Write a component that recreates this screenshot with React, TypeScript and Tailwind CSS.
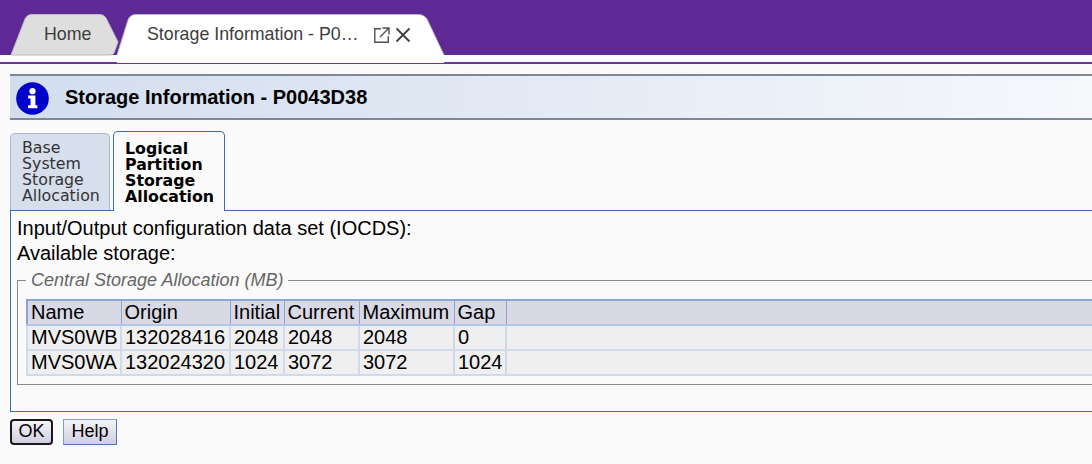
import React from "react";

const rows = [
  ["MVS0WB", "132028416", "2048", "2048", "2048", "0"],
  ["MVS0WA", "132024320", "1024", "3072", "3072", "1024"],
];
const heads = ["Name", "Origin", "Initial", "Current", "Maximum", "Gap"];
const widths = ["w-[94px]", "w-[109px]", "w-[54px]", "w-[75px]", "w-[95px]", "w-[52px]"];

export default function App() {
  return (
    <div className="h-[464px] w-[1092px] overflow-hidden bg-[#fafafa] font-['Liberation_Sans',Arial,sans-serif] text-black">
      <div className="relative h-[55px] bg-[#5f2995]">
        <svg className="absolute left-0 top-0" width="460" height="63" viewBox="0 0 460 63">
          <path d="M11 55 L25 19 Q27 14.5 32 14.5 L100 14.5 Q104 14.5 106 18 L118 42 L114 53 Q113 55 110 55 Z" fill="#dedede" stroke="#bcbcbc" />
          <path d="M117 55 L128 20 Q130 14.5 136 14.5 L418 14.5 Q424 14.5 427 19 L444 55 L444 63 L117 63 Z" fill="#ffffff" />
          <path d="M117 55 L128 20 Q130 14.5 136 14.5 L418 14.5 Q424 14.5 427 19 L444 55" fill="none" stroke="#b9b4c4" />
        </svg>
        <div className="relative flex h-[55px] items-center pt-[14px] text-[17.8px] text-[#3d3d3d]">
          <span className="ml-[44px] w-[103px]">Home</span>
          <span className="w-[227px] whitespace-nowrap">Storage Information - P0…</span>
          <svg width="16" height="16" viewBox="0 0 16 16" fill="none" stroke="#505050" strokeWidth="1.4">
            <path d="M7 1.7 H0.8 V15.2 H14.3 V9" />
            <path d="M6 10 L14.5 1.5 M8.5 1 H15 V7.5" />
          </svg>
          <svg width="16" height="16" viewBox="0 0 16 16" fill="none" stroke="#404040" strokeWidth="1.8" className="ml-[5px]">
            <path d="M1.5 1.5 L14.5 14.5 M14.5 1.5 L1.5 14.5" />
          </svg>
        </div>
      </div>
      <div className="h-[7px] bg-white" />
      <div className="h-[2px] bg-[#6a35a0]" />

      <div className="pl-[10px] pt-[10px]">
        <div className="flex h-[46px] items-center border-y-2 border-[#7d8796] bg-gradient-to-r from-[#d2ddee] to-[#f6f8fc]">
          <svg width="33" height="33" viewBox="0 0 34 34" className="ml-[6px] mt-[3px]">
            <circle cx="17" cy="17" r="16.8" fill="#0000cc" />
            <circle cx="17" cy="9.5" r="3.2" fill="#fff" />
            <path d="M12.5 14 H20 V24 H22 V27 H12.5 V24 H15 V17 H12.5 Z" fill="#fff" />
          </svg>
          <span className="ml-[16px] text-[20px] font-bold">Storage Information - P0043D38</span>
        </div>

        <div className="mt-[10px] flex h-[80px] items-end gap-[3px] font-['DejaVu_Sans',Verdana,sans-serif] text-[15.8px] leading-[16px]">
          <div className="h-[77px] w-[100px] rounded-t-[5px] border border-b-0 border-[#a9b8d2] bg-[#d7deec] pl-[11px] pt-[6px] text-[#333]">
            Base<br />System<br />Storage<br />Allocation
          </div>
          <div className="relative -mb-px h-[80px] w-[112px] rounded-t-[5px] border border-b-0 border-[#3a6ea5] bg-[#fafafa] pl-[11px] pt-[9px] font-bold">
            Logical<br />Partition<br />Storage<br />Allocation
          </div>
        </div>

        <div className="h-[202px] border border-r-0 border-[#3a6ea5] pl-[6px] pt-[5px] text-[20px] leading-[25px]">
          <div>Input/Output configuration data set (IOCDS):</div>
          <div>Available storage:</div>
          <fieldset className="mt-[4px] h-[115px] border border-r-0 border-[#8a8a8a] pl-[8px]">
            <legend className="px-[5px] text-[18px] italic leading-[20px] text-[#666]">Central Storage Allocation (MB)</legend>
            <table className="mt-[9px] w-full table-fixed border-collapse border-2 border-r-0 border-[#8aa5d6] text-[20px] leading-[23px]">
              <thead>
                <tr className="h-[25px] bg-[#d9d9e6]">
                  {heads.map((h, i) => (
                    <th key={h} className={`${widths[i]} border border-b-2 border-[#8aa5d6] border-b-[#b4c6e6] px-[3px] text-left font-normal`}>{h}</th>
                  ))}
                  <th className="border-t border-b-2 border-[#8aa5d6] border-b-[#b4c6e6]" />
                </tr>
              </thead>
              <tbody>
                {rows.map((r) => (
                  <tr key={r[0]} className="h-[25px] bg-[#efefef]">
                    {r.map((c, i) => (
                      <td key={i} className="border-x-2 border-b-2 border-[#cfdaec] px-[3px]">{c}</td>
                    ))}
                    <td className="border-b-2 border-[#cfdaec]" />
                  </tr>
                ))}
              </tbody>
            </table>
          </fieldset>
        </div>

        <div className="mt-[7px] flex gap-[10px] text-[18px]">
          <button className="h-[26px] w-[43px] rounded-[4px] border-2 border-[#1a1a1a] bg-gradient-to-b from-[#f4f4f8] to-[#cfcfe0] pb-[2px] leading-[20px]">OK</button>
          <button className="h-[26px] w-[54px] border border-[#7f9fc6] border-b-[#4a7ab0] border-r-[#4a7ab0] bg-gradient-to-b from-[#f4f4f8] to-[#cfcfe0] pb-[2px] leading-[20px]">Help</button>
        </div>
      </div>
    </div>
  );
}
